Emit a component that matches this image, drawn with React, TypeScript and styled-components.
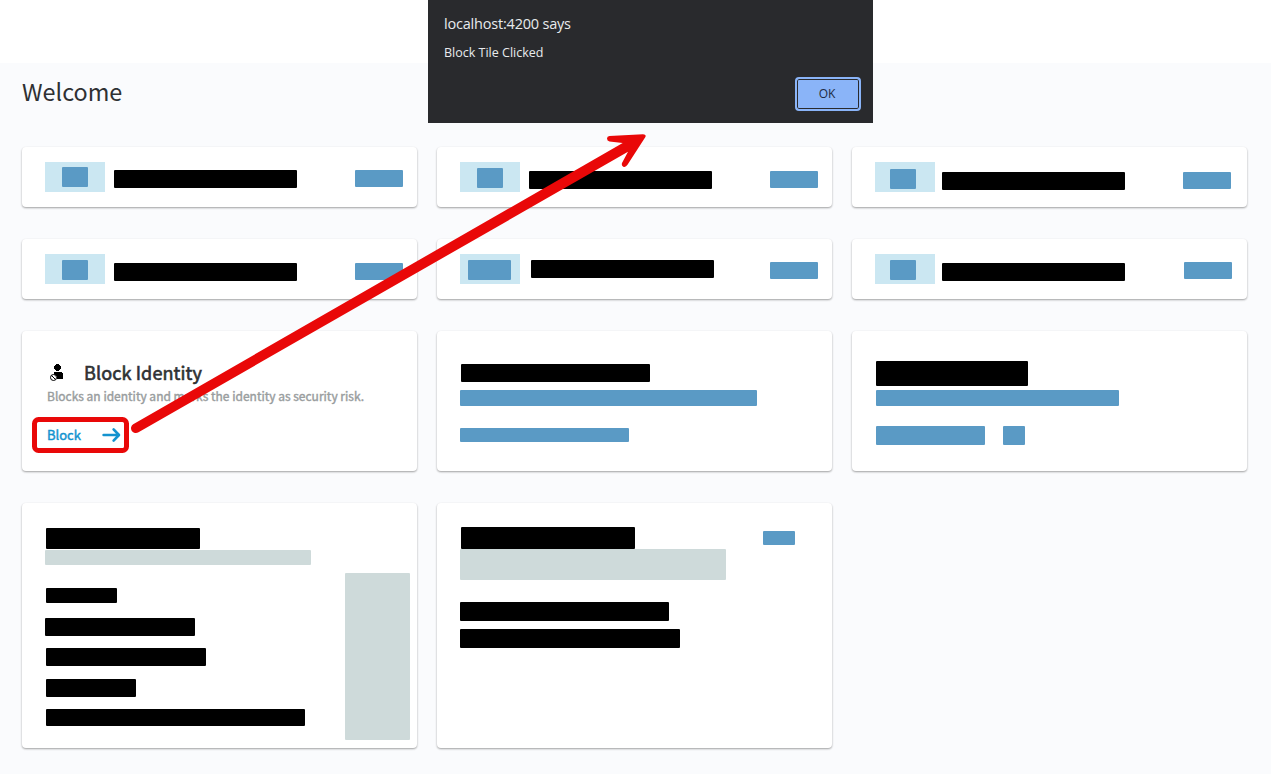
import React from "react";
import styled, { createGlobalStyle } from "styled-components";

const GlobalStyle = createGlobalStyle`
  * { box-sizing: border-box; }
  body {
    margin: 0;
    background: #fafbfd;
    font-family: "Noto Sans CJK SC", "Noto Sans", sans-serif;
    color: #2f3133;
  }
`;

const tones = {
  black: "#000",
  blue: "#5a9ac5",
  pale: "#cbe7f2",
  grey: "#cedada",
};

const Page = styled.div`
  position: relative;
  width: 1271px;
  height: 774px;
  overflow: hidden;
  background: #fafbfd;
`;

const Header = styled.header`
  height: 63px;
  background: #fff;
`;

const Main = styled.main`
  padding: 0 24px 0 22px;
`;

const Title = styled.h1`
  margin: 0;
  height: 84px;
  padding-top: 10px;
  font-size: 23.4px;
  line-height: 36px;
  font-weight: 400;
  white-space: nowrap;
`;

const Grid = styled.div`
  display: grid;
  grid-template-columns: repeat(3, 395px);
  grid-template-rows: 60px 60px 140px 245px;
  column-gap: 20px;
  row-gap: 32px;
`;

const Card = styled.section`
  display: flex;
  align-items: flex-start;
  background: #fff;
  border-radius: 4px;
  box-shadow: 0 1px 2px rgba(0, 0, 0, 0.32), 0 1px 3px rgba(0, 0, 0, 0.06);
`;

const CompactCard = styled(Card)`
  padding: 15px 0 0 23px;
`;

const Stack = styled.div`
  display: flex;
  flex-direction: column;
  align-items: flex-start;
`;

const Row = styled.div`
  display: flex;
  align-items: flex-start;
`;

type BarProps = {
  $w: number;
  $h: number;
  $top?: number;
  $left?: number;
  $tone?: keyof typeof tones;
};

const Bar = styled.div<BarProps>`
  flex: none;
  width: ${(p) => p.$w}px;
  height: ${(p) => p.$h}px;
  margin: ${(p) => p.$top ?? 0}px 0 0 ${(p) => p.$left ?? 0}px;
  border-radius: 1px;
  background: ${(p) => tones[p.$tone ?? "black"]};
`;

const Badge = styled.div<{ $padTop: number; $padLeft: number }>`
  flex: none;
  width: 60px;
  height: 30px;
  padding: ${(p) => p.$padTop}px 0 0 ${(p) => p.$padLeft}px;
  background: ${tones.pale};
`;

const BlockCard = styled(Card)`
  flex-direction: column;
  padding: 28px 0 0 25px;
`;

const BlockHeading = styled.div`
  display: flex;
  height: 28px;
  padding: 3px 0 0 3px;

  svg { flex: none; display: block; margin-top: 2px; }
`;

const BlockTitle = styled.h2`
  margin: 0 0 0 19px;
  padding-left: 1px;
  font-size: 18px;
  line-height: 20px;
  font-weight: 400;
  -webkit-text-stroke: 0.6px currentColor;
  letter-spacing: 0.12px;
  white-space: nowrap;
`;

const BlockText = styled.p`
  margin: 0;
  font-size: 12px;
  line-height: 18px;
  height: 18px;
  font-weight: 400;
  -webkit-text-stroke: 0.4px currentColor;
  color: #999d9e;
  white-space: nowrap;
`;

const BlockAction = styled.button`
  display: flex;
  align-items: center;
  justify-content: space-between;
  width: 74px;
  height: 20px;
  margin-top: 20px;
  padding: 0;
  border: 0;
  background: none;
  font: 400 13px/20px "Noto Sans CJK SC", "Noto Sans", sans-serif;
  -webkit-text-stroke: 0.45px currentColor;
  color: #1493cf;
`;

const Dialog = styled.div`
  position: absolute;
  top: 0;
  left: 428px;
  width: 445px;
  height: 123px;
  padding: 14px 12px 12px 16px;
  display: flex;
  flex-direction: column;
  background: #292a2d;
  color: #e8eaed;
  font-family: "Open Sans", "Noto Sans", sans-serif;
  white-space: nowrap;
`;

const DialogOrigin = styled.div`
  font-size: 14.5px;
  line-height: 20px;
  letter-spacing: -0.2px;
`;

const DialogMessage = styled.div`
  margin-top: 10px;
  font-size: 12.5px;
  line-height: 18px;
`;

const OkButton = styled.button`
  align-self: flex-end;
  width: 66px;
  height: 34px;
  margin-top: 15px;
  padding: 0 2px 0 0;
  border: 2px solid #8ab4f8;
  border-radius: 4px;
  background: #8ab4f8;
  box-shadow: inset 0 0 0 1px #292a2d;
  color: #202b42;
  font: 12px/28px "Open Sans", "Noto Sans", sans-serif;
`;

const Annotation = styled.svg`
  position: absolute;
  top: 0;
  left: 0;
  pointer-events: none;
`;

type Tile = {
  icon: [top: number, left: number, width: number];
  label: [top: number, left: number];
  action: [top: number, left: number];
};

const tiles: Tile[] = [
  { icon: [5, 17, 26], label: [8, 9], action: [8, 58] },
  { icon: [6, 17, 26], label: [9, 9], action: [9, 58] },
  { icon: [7, 15, 26], label: [10, 7], action: [10, 58] },
  { icon: [6, 17, 26], label: [9, 9], action: [9, 58] },
  { icon: [6, 8, 43], label: [6, 11], action: [8, 56] },
  { icon: [6, 15, 26], label: [9, 7], action: [8, 59] },
];

function PersonBlockedIcon() {
  return (
    <svg width="14" height="18" viewBox="0 0 14 18">
      <path d="M6 0h3v1h1v1h1v3h-1v1H9v1H6V6H5V5H4V2h1V1h1z" fill="#000" />
      <path d="M4 8h8v1h1v6H7v-3H6v-1H4z" fill="#000" />
      <circle cx="3.5" cy="13.5" r="3" fill="#fff" stroke="#000" strokeWidth="1" />
      <path d="M1.5 11.5l4 4" stroke="#000" strokeWidth="1" />
    </svg>
  );
}

function ArrowIcon() {
  return (
    <svg width="20" height="16" viewBox="0 0 20 16" fill="none" stroke="#1493cf" strokeWidth="2.6" strokeLinecap="round" strokeLinejoin="round">
      <path d="M2.6 8h15.2M12.6 2.4L18 8l-5.4 5.6" />
    </svg>
  );
}

export default function App() {
  return (
    <Page>
      <GlobalStyle />
      <Header />
      <Main>
        <Title>Welcome</Title>
        <Grid>
          {tiles.map(({ icon, label, action }, i) => (
            <CompactCard key={i}>
              <Badge $padTop={icon[0]} $padLeft={icon[1]}>
                <Bar $w={icon[2]} $h={20} $tone="blue" />
              </Badge>
              <Bar $w={183} $h={18} $top={label[0]} $left={label[1]} />
              <Bar $w={48} $h={17} $top={action[0]} $left={action[1]} $tone="blue" />
            </CompactCard>
          ))}

          <BlockCard>
            <BlockHeading>
              <PersonBlockedIcon />
              <BlockTitle>Block Identity</BlockTitle>
            </BlockHeading>
            <BlockText>Blocks an identity and marks the identity as security risk.</BlockText>
            <BlockAction>
              Block
              <ArrowIcon />
            </BlockAction>
          </BlockCard>

          <Card>
            <Stack>
              <Bar $w={189} $h={18} $top={33} $left={24} />
              <Bar $w={297} $h={16} $top={8} $left={23} $tone="blue" />
              <Bar $w={169} $h={14} $top={22} $left={23} $tone="blue" />
            </Stack>
          </Card>

          <Card>
            <Stack>
              <Bar $w={152} $h={25} $top={30} $left={24} />
              <Bar $w={243} $h={16} $top={4} $left={24} $tone="blue" />
              <Row>
                <Bar $w={109} $h={19} $top={20} $left={24} $tone="blue" />
                <Bar $w={22} $h={19} $top={20} $left={18} $tone="blue" />
              </Row>
            </Stack>
          </Card>

          <Card>
            <Stack>
              <Bar $w={154} $h={21} $top={25} $left={24} />
              <Bar $w={266} $h={15} $top={1} $left={23} $tone="grey" />
              <Bar $w={71} $h={15} $top={23} $left={24} />
              <Bar $w={150} $h={18} $top={15} $left={23} />
              <Bar $w={160} $h={18} $top={12} $left={24} />
              <Bar $w={90} $h={18} $top={13} $left={24} />
              <Bar $w={259} $h={17} $top={12} $left={24} />
            </Stack>
            <Bar $w={65} $h={167} $top={70} $left={34} $tone="grey" />
          </Card>

          <Card>
            <Stack>
              <Bar $w={174} $h={22} $top={24} $left={24} />
              <Bar $w={266} $h={31} $left={23} $tone="grey" />
              <Bar $w={209} $h={19} $top={22} $left={23} />
              <Bar $w={220} $h={19} $top={8} $left={23} />
            </Stack>
            <Bar $w={32} $h={14} $top={28} $left={37} $tone="blue" />
          </Card>
        </Grid>
      </Main>

      <Dialog role="dialog">
        <DialogOrigin>localhost:4200 says</DialogOrigin>
        <DialogMessage>Block Tile Clicked</DialogMessage>
        <OkButton>OK</OkButton>
      </Dialog>

      <Annotation width="1271" height="774" viewBox="0 0 1271 774">
        <rect x="34.5" y="419.5" width="92" height="31" rx="4" fill="none" stroke="#e90808" strokeWidth="5" />
        <path
          fill="#e90808"
          d="M133.2 424.2L622.7 143L609.5 141.5Q607 141 607 138.6Q607 136.3 609.5 136L643 134.2Q646.6 134.2 645.4 137L627.5 164.8Q625.6 167.7 623.3 166.7Q621.2 165.6 622 163L628 151.8L138.5 432.3A4.8 4.8 0 0 1 133.2 424.2Z"
        />
      </Annotation>
    </Page>
  );
}
